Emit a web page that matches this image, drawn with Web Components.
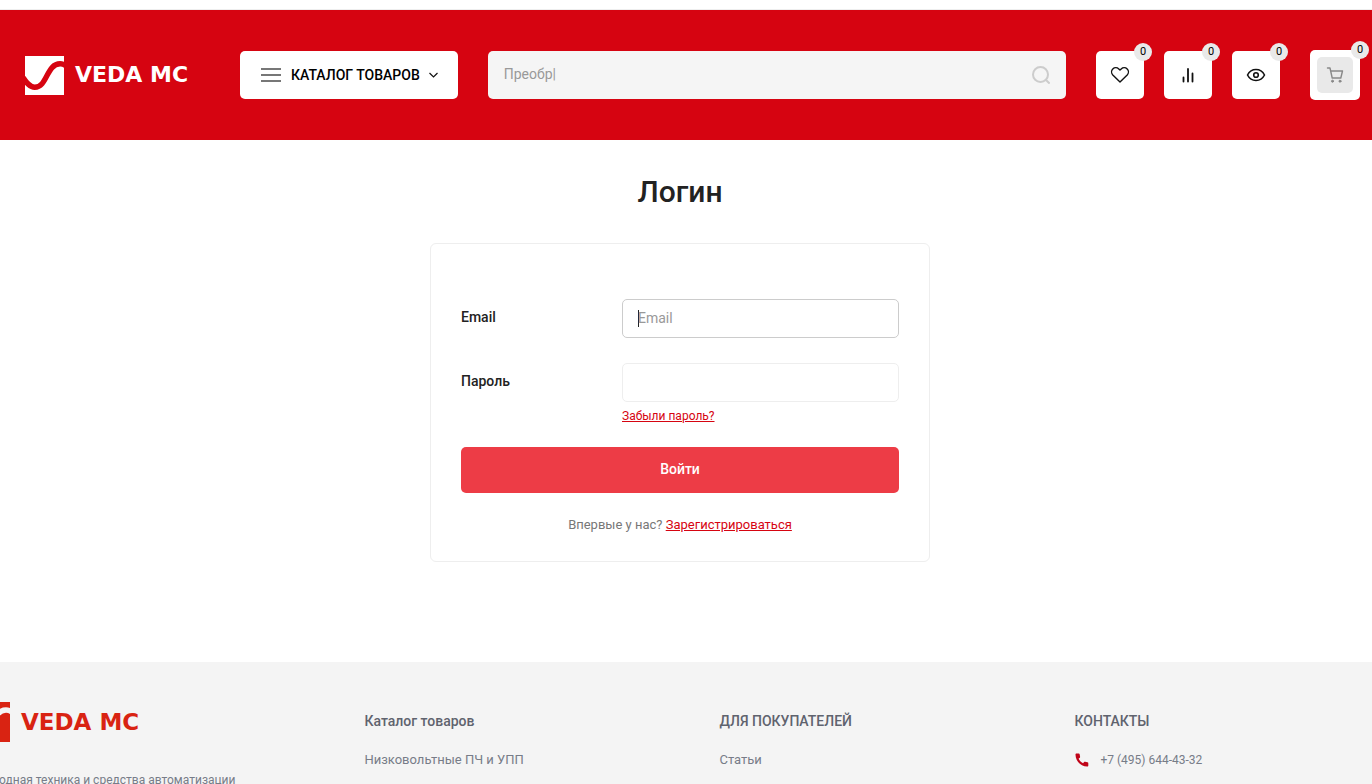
<!DOCTYPE html>
<html lang="ru">
<head>
<meta charset="utf-8">
<meta name="viewport" content="width=device-width, initial-scale=1">
<title>Логин</title>
<style>
  body {
    margin: 0;
    background: #fff;
    color: #222;
    font: 14px/20px Roboto, "Liberation Sans", sans-serif;
  }
</style>
</head>
<body>
<shop-page>
  <shop-header slot="header"></shop-header>
  <login-card></login-card>
  <shop-footer slot="footer"></shop-footer>
</shop-page>

<script>
const icons = {
  heart: `<svg width="20" height="20" viewBox="0 0 20 20" fill="none" stroke="#111" stroke-width="1.4" stroke-linejoin="round"><path d="M10 17 2.800 9.900C1.200 8.200 1.200 5.500 2.800 3.900c1.700-1.700 4.300-1.700 6 0L10 5.100l1.200-1.200c1.700-1.700 4.300-1.700 6 0 1.600 1.600 1.600 4.300 0 6z"/></svg>`,
  chart: `<svg width="20" height="20" viewBox="0 0 20 20" fill="none" stroke="#111" stroke-width="1.800" stroke-linecap="round"><path d="M5.500 12.500v4M10 4v12.500M14.500 8.500v8"/></svg>`,
  eye: `<svg width="20" height="20" viewBox="0 0 20 20" fill="none" stroke="#111" stroke-width="1.600" stroke-linejoin="round"><path d="M1.500 10C3.300 6.500 6.300 4.500 10 4.500s6.700 2 8.500 5.500c-1.800 3.500-4.800 5.500-8.500 5.500S3.300 13.500 1.500 10z"/><circle cx="10" cy="10" r="2.300"/></svg>`,
  cart: `<svg width="18" height="18" viewBox="0 0 18 18" fill="none" stroke="#888" stroke-width="1.400" stroke-linecap="round" stroke-linejoin="round"><path d="M1.500 2h2.500l2.200 10h8.600l1.700-7H4.700"/><circle cx="6.500" cy="15.200" r="1" fill="#888" stroke-width="1"/><circle cx="14" cy="15.200" r="1" fill="#888" stroke-width="1"/></svg>`,
};

class ShopPage extends HTMLElement {
  constructor() {
    super();
    this.attachShadow({ mode: "open" });
    this.shadowRoot.innerHTML = `
      <style>
        :host {
          display: block;
          overflow: hidden;
        }
        .strip {
          height: 9px;
          border-bottom: 1px solid #eee;
        }
        main {
          padding: 32px 12px 100px 0;
        }
        h1 {
          margin: 0 0 31px;
          font-size: 30px;
          line-height: 40px;
          font-weight: 500;
          text-align: center;
        }
      </style>
      <div class="strip"></div>
      <slot name="header"></slot>
      <main>
        <h1>Логин</h1>
        <slot></slot>
      </main>
      <slot name="footer"></slot>
    `;
  }
}

class BrandLogo extends HTMLElement {
  constructor() {
    super();
    this.attachShadow({ mode: "open" });
    this.shadowRoot.innerHTML = `
      <style>
        :host {
          display: block;
        }
        a {
          display: flex;
          align-items: center;
          gap: 11px;
          color: inherit;
          font-family: "DejaVu Sans", Verdana, sans-serif;
          font-size: var(--logo-text, 23px);
          font-weight: bold;
          line-height: 40px;
          text-decoration: none;
          white-space: nowrap;
        }
        svg {
          display: block;
          width: var(--logo-size, 40px);
          height: var(--logo-size, 40px);
        }
        .wave {
          stroke: var(--logo-wave, #fff);
        }
      </style>
      <a href="#">
        <svg viewBox="0 0 40 40" aria-hidden="true">
          <path d="M0 0h40v40H0z" fill="currentColor"/>
          <path class="wave" fill="none" stroke-width="5.500" d="M-2 22C2 28 5 32 10 32C23 32 22 8 36 8C38 8 40 8.500 42 10"/>
        </svg>
        <span>VEDA MC</span>
      </a>
    `;
  }
}

class IconButton extends HTMLElement {
  connectedCallback() {
    const name = this.getAttribute("icon");
    this.attachShadow({ mode: "open" });
    this.shadowRoot.innerHTML = `
      <style>
        :host {
          display: block;
          position: relative;
          flex: none;
        }
        button {
          display: grid;
          place-items: center;
          width: 48px;
          height: 48px;
          padding: 0;
          border: 0;
          border-radius: 5px;
          background: #fff;
          cursor: pointer;
        }
        button.cart {
          width: 50px;
          height: 50px;
        }
        .icon {
          display: grid;
          place-items: center;
          width: 36px;
          height: 36px;
          border-radius: 5px;
        }
        .cart .icon {
          background: #e9e9e9;
        }
        .count {
          position: absolute;
          top: -8px;
          right: -8px;
          width: 18px;
          border-radius: 9px;
          background: #e9e9e9;
          color: #000;
          font-size: 11px;
          line-height: 18px;
          text-align: center;
          pointer-events: none;
        }
        .cart + .count {
          top: -9px;
          right: -9px;
        }
      </style>
      <button type="button" class="${name}" aria-label="${this.getAttribute("label")}">
        <span class="icon">${icons[name]}</span>
      </button>
      <span class="count"><slot></slot></span>
    `;
  }
}

class ShopHeader extends HTMLElement {
  constructor() {
    super();
    this.attachShadow({ mode: "open" });
    this.shadowRoot.innerHTML = `
      <style>
        :host {
          display: block;
          background: #d60411;
        }
        header {
          display: flex;
          align-items: center;
          gap: 30px;
          padding: 40px 12px 40px 25px;
        }
        brand-logo {
          width: 185px;
          color: #fff;
          --logo-size: 39px;
          --logo-text: 22px;
          --logo-wave: #d60411;
        }
        .catalog {
          display: flex;
          align-items: center;
          flex: none;
          height: 48px;
          padding: 0 20px;
          border: 0;
          border-radius: 5px;
          background: #fff;
          color: #000;
          font: 500 14px/20px Roboto, sans-serif;
          text-transform: uppercase;
          cursor: pointer;
        }
        .catalog .bars {
          margin-right: 9px;
        }
        .catalog .arrow {
          margin-left: 9px;
        }
        form {
          display: flex;
          align-items: center;
          flex: 1;
          height: 48px;
          padding: 0 16px;
          box-sizing: border-box;
          border-radius: 5px;
          background: #f5f5f5;
        }
        input {
          flex: 1;
          min-width: 0;
          padding: 0 0 2px;
          border: 0;
          outline: none;
          background: none;
          font: 14px/20px Roboto, sans-serif;
        }
        input::placeholder {
          color: #999;
        }
        .search {
          display: flex;
          padding: 0;
          border: 0;
          background: none;
          cursor: pointer;
        }
        .links {
          display: flex;
          gap: 20px;
        }
      </style>
      <header>
        <brand-logo></brand-logo>
        <button type="button" class="catalog">
          <svg class="bars" width="22" height="16" viewBox="0 0 22 16" stroke="#777" stroke-width="2"><path d="M1 2h20M1 8h20M1 14h20"/></svg>
          Каталог товаров
          <svg class="arrow" width="9" height="6" viewBox="0 0 9 6" fill="none" stroke="#111" stroke-width="1.200"><path d="M.5 1l4 4 4-4"/></svg>
        </button>
        <form role="search">
          <input type="text" placeholder="Преобр|" aria-label="Поиск">
          <button type="button" class="search" aria-label="Найти">
            <svg width="18" height="18" viewBox="0 0 18 18" fill="none" stroke="#ccc" stroke-width="2"><circle cx="8.500" cy="8.500" r="7.500"/><path d="M13.800 13.800l3.800 3.800"/></svg>
          </button>
        </form>
        <div class="links">
          <icon-button icon="heart" label="Избранное">0</icon-button>
          <icon-button icon="chart" label="Сравнение">0</icon-button>
          <icon-button icon="eye" label="Просмотренные">0</icon-button>
        </div>
        <icon-button icon="cart" label="Корзина">0</icon-button>
      </header>
    `;
  }
}

class LoginCard extends HTMLElement {
  constructor() {
    super();
    this.attachShadow({ mode: "open" });
    this.shadowRoot.innerHTML = `
      <style>
        :host {
          display: block;
          box-sizing: border-box;
          max-width: 500px;
          margin: 0 auto;
          padding: 55px 30px 26px;
          border: 1px solid #eee;
          border-radius: 6px;
        }
        .row {
          display: grid;
          grid-template-columns: 161px 1fr;
          margin-bottom: 25px;
        }
        .row.password {
          margin-bottom: 23px;
        }
        label {
          padding-top: 8px;
          font-weight: 500;
        }
        input {
          display: block;
          box-sizing: border-box;
          width: 100%;
          height: 39px;
          padding: 0 15px 2px;
          border: 1px solid #eee;
          border-radius: 5px;
          outline: none;
          background: #fff;
          color: #222;
          font: 14px/20px Roboto, sans-serif;
        }
        input::placeholder {
          color: #999;
        }
        input:focus {
          border-color: #ccc;
        }
        /* steady caret while the field is empty */
        input:focus:placeholder-shown {
          caret-color: transparent;
          background: linear-gradient(#222, #222) 15px center / 1px 17px no-repeat #fff;
        }
        a {
          color: #d60411;
        }
        .forgot {
          display: block;
          width: fit-content;
          margin-top: 6px;
          font-size: 12px;
          line-height: 16px;
        }
        button {
          display: block;
          width: 100%;
          height: 46px;
          padding: 0 0 2px;
          border: 0;
          border-radius: 5px;
          background: #ed3c46;
          color: #fff;
          font: 500 14px/20px Roboto, sans-serif;
          cursor: pointer;
        }
        p {
          margin: 22px 0 0;
          color: #777;
          font-size: 13px;
          text-align: center;
        }
      </style>
      <form>
        <div class="row">
          <label for="email">Email</label>
          <input type="email" id="email" placeholder="Email">
        </div>
        <div class="row password">
          <label for="password">Пароль</label>
          <div>
            <input type="password" id="password">
            <a class="forgot" href="#">Забыли пароль?</a>
          </div>
        </div>
        <button type="button">Войти</button>
        <p>Впервые у нас? <a href="#">Зарегистрироваться</a></p>
      </form>
    `;
  }

  connectedCallback() {
    this.shadowRoot.querySelector("#email").focus();
  }
}

class ShopFooter extends HTMLElement {
  constructor() {
    super();
    this.attachShadow({ mode: "open" });
    this.shadowRoot.innerHTML = `
      <style>
        :host {
          display: block;
          overflow: hidden;
          background: #f4f4f4;
          color: #777c88;
          font-size: 13px;
        }
        footer {
          display: grid;
          grid-template-columns: 10fr 9fr 9fr 8fr;
          margin: 0 -18px 0 -30px;
          padding: 40px 0;
        }
        brand-logo {
          color: #d92312;
          --logo-wave: #f4f4f4;
        }
        .about {
          margin: 28px 0 0;
          font-size: 12px;
        }
        h2 {
          margin: 9px 0 19px;
          color: #5f636e;
          font-size: 14px;
          font-weight: 500;
          line-height: 20px;
        }
        a {
          color: inherit;
          text-decoration: none;
        }
        .phone {
          display: flex;
          align-items: center;
          gap: 10px;
          font-size: 12px;
        }
      </style>
      <footer>
        <section>
          <brand-logo></brand-logo>
          <p class="about">Приводная техника и средства автоматизации</p>
        </section>
        <section>
          <h2>Каталог товаров</h2>
          <a href="#">Низковольтные ПЧ и УПП</a>
        </section>
        <section>
          <h2>ДЛЯ ПОКУПАТЕЛЕЙ</h2>
          <a href="#">Статьи</a>
        </section>
        <section>
          <h2>КОНТАКТЫ</h2>
          <a class="phone" href="tel:+74956444332">
            <svg width="16" height="16" viewBox="0 0 16 16" fill="#c00418"><path d="M1.500 2.500C1.500 1.800 2 1.500 2.500 1.500h2.200c.6 0 .9.300 1 .9l.4 2.400c.1.500-.1.900-.5 1.100l-1 .7c.9 2.200 2.200 3.600 4.500 4.600l.8-1c.3-.4.700-.5 1.200-.4l2.300.5c.6.100.9.500.9 1v2.200c0 .600-.4 1-1 1C6.500 14.500 1.500 9 1.500 2.500z"/></svg>
            +7 (495) 644-43-32
          </a>
        </section>
      </footer>
    `;
  }
}

customElements.define("brand-logo", BrandLogo);
customElements.define("icon-button", IconButton);
customElements.define("shop-header", ShopHeader);
customElements.define("login-card", LoginCard);
customElements.define("shop-footer", ShopFooter);
customElements.define("shop-page", ShopPage);
</script>
</body>
</html>
